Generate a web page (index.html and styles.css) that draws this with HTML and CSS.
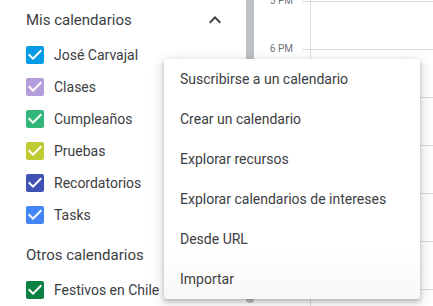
FILE: index.html
```html
<!DOCTYPE html>
<html lang="es">
<head>
<meta charset="utf-8">
<link rel="stylesheet" href="styles.css">
</head>
<body>
<div class="app">
  <aside class="sidebar">
    <div class="section-head">
      <span>Mis calendarios</span>
      <svg class="chev" viewBox="0 0 24 24" width="24" height="24"><path d="M7.41 15.41L12 10.83l4.59 4.58L18 14l-6-6-6 6z" fill="#3c4043"/></svg>
    </div>
    <ul class="cal-list">
      <li class="cal"><svg class="cb" viewBox="3 3 18 18" width="18" height="18"><path fill="#039be5" d="M19 3H5c-1.11 0-2 .9-2 2v14c0 1.1.89 2 2 2h14c1.11 0 2-.9 2-2V5c0-1.1-.89-2-2-2zm-9 14l-5-5 1.41-1.41L10 14.17l7.59-7.59L19 8l-9 9z"/></svg><span>José Carvajal</span></li>
      <li class="cal"><svg class="cb" viewBox="3 3 18 18" width="18" height="18"><path fill="#b39ddb" d="M19 3H5c-1.11 0-2 .9-2 2v14c0 1.1.89 2 2 2h14c1.11 0 2-.9 2-2V5c0-1.1-.89-2-2-2zm-9 14l-5-5 1.41-1.41L10 14.170l7.59-7.59L19 8l-9 9z"/></svg><span>Clases</span></li>
      <li class="cal"><svg class="cb" viewBox="3 3 18 18" width="18" height="18"><path fill="#33b679" d="M19 3H5c-1.11 0-2 .9-2 2v14c0 1.1.89 2 2 2h14c1.11 0 2-.9 2-2V5c0-1.1-.89-2-2-2zm-9 14l-5-5 1.41-1.41L10 14.17l7.59-7.59L19 8l-9 9z"/></svg><span>Cumpleaños</span></li>
      <li class="cal"><svg class="cb" viewBox="3 3 18 18" width="18" height="18"><path fill="#c0ca33" d="M19 3H5c-1.11 0-2 .9-2 2v14c0 1.1.89 2 2 2h14c1.11 0 2-.9 2-2V5c0-1.1-.89-2-2-2zm-9 14l-5-5 1.41-1.41L10 14.17l7.59-7.59L19 8l-9 9z"/></svg><span>Pruebas</span></li>
      <li class="cal"><svg class="cb" viewBox="3 3 18 18" width="18" height="18"><path fill="#3f51b5" d="M19 3H5c-1.11 0-2 .9-2 2v14c0 1.1.89 2 2 2h14c1.11 0 2-.9 2-2V5c0-1.1-.89-2-2-2zm-9 14l-5-5 1.41-1.41L10 14.17l7.59-7.59L19 8l-9 9z"/></svg><span>Recordatorios</span></li>
      <li class="cal"><svg class="cb" viewBox="3 3 18 18" width="18" height="18"><path fill="#4285f4" d="M19 3H5c-1.11 0-2 .9-2 2v14c0 1.1.89 2 2 2h14c1.11 0 2-.9 2-2V5c0-1.1-.89-2-2-2zm-9 14l-5-5 1.41-1.41L10 14.17l7.59-7.59L19 8l-9 9z"/></svg><span>Tasks</span></li>
    </ul>
    <div class="section-head other">
      <span>Otros calendarios</span>
    </div>
    <ul class="cal-list">
      <li class="cal"><svg class="cb" viewBox="3 3 18 18" width="18" height="18"><path fill="#0b8043" d="M19 3H5c-1.11 0-2 .9-2 2v14c0 1.1.89 2 2 2h14c1.11 0 2-.9 2-2V5c0-1.1-.89-2-2-2zm-9 14l-5-5 1.41-1.41L10 14.17l7.59-7.59L19 8l-9 9z"/></svg><span>Festivos en Chile</span></li>
    </ul>
  </aside>
  <div class="scrollbar"><div class="thumb"></div></div>
  <div class="times">
    <div class="time">5 PM</div>
    <div class="time">6 PM</div>
  </div>
  <div class="grid"></div>
</div>
<ul class="menu">
  <li class="menu-item">Suscribirse a un calendario</li>
  <li class="menu-item">Crear un calendario</li>
  <li class="menu-item">Explorar recursos</li>
  <li class="menu-item">Explorar calendarios de intereses</li>
  <li class="menu-item">Desde URL</li>
  <li class="menu-item">Importar</li>
</ul>
</body>
</html>
```

FILE: styles.css
```css
* { box-sizing: border-box; }
html, body {
  margin: 0;
  padding: 0;
  width: 433px;
  height: 306px;
  overflow: hidden;
  background: #fff;
  font-family: Roboto, "Noto Sans", Arial, sans-serif;
  color: #3c4043;
}
.app {
  display: flex;
  height: 306px;
}
.sidebar {
  width: 246px;
  flex: none;
  padding-left: 26px;
}
.section-head {
  height: 39px;
  display: flex;
  align-items: center;
  justify-content: space-between;
  padding-right: 19px;
  font-size: 15px;
  font-weight: 400;
  color: #3c4043;
}
.section-head.other {
  height: 38px;
  margin-top: 5px;
}
.chev { display: block; }
.cal-list {
  list-style: none;
  margin: 0;
  padding: 0;
}
.cal {
  height: 32px;
  display: flex;
  align-items: center;
  gap: 10px;
  font-size: 14px;
  color: #3c4043;
}
.cb { display: block; flex: none; }
.scrollbar {
  width: 8px;
  flex: none;
}
.thumb {
  height: 303px;
  background: #bdc1c6;
  border-radius: 0 0 4px 4px;
}
.times {
  width: 48px;
  flex: none;
  margin-top: -23px;
  padding-right: 9px;
}
.time {
  height: 48px;
  line-height: 48px;
  font-size: 10px;
  color: #70757a;
  text-align: right;
}
.grid {
  flex: 1;
  background:
    linear-gradient(to right, transparent 8px, #dadce0 8px, #dadce0 9px, transparent 9px),
    repeating-linear-gradient(to bottom, #dadce0 0, #dadce0 1px, transparent 1px, transparent 48px);
  background-position: 0 0, 0 1px;
}
.menu {
  position: absolute;
  left: 164px;
  top: 59px;
  width: 256px;
  margin: 0;
  padding: 0;
  list-style: none;
  background: linear-gradient(to bottom, #fff 80%, #f7f7f7);
  border-radius: 4px;
  box-shadow: 0 2px 4px rgba(60,64,67,.3), 0 4px 12px 3px rgba(60,64,67,.15);
}
.menu-item {
  height: 40px;
  line-height: 40px;
  padding-left: 16px;
  font-size: 14px;
  color: #3c4043;
  white-space: nowrap;
}
```
